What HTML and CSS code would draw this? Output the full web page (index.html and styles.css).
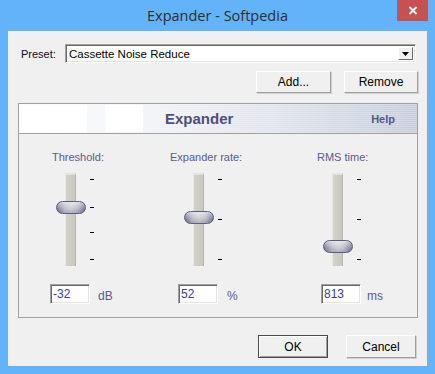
FILE: index.html
```html
<!DOCTYPE html>
<html>
<head>
  <title>Expander - Softpedia</title>
  <link rel="stylesheet" href="styles.css">
</head>
<body>

  <div class="window">
    <div class="titlebar">
      <span class="title">Expander - Softpedia</span>
      <span class="close">
        <svg width="10" height="9" viewBox="0 0 10 9"><path d="M1.5 1 L8.5 8 M8.5 1 L1.5 8" stroke="#fff" stroke-width="2"/></svg>
      </span>
    </div>

    <div class="client">
      <div class="preset-row">
        <label class="preset-label">Preset:</label>
        <div class="combo">
          <span class="combo-text">Cassette Noise Reduce</span>
          <span class="combo-btn">
            <svg width="7" height="4" viewBox="0 0 7 4"><path d="M0 0 H7 L3.5 4 Z" fill="#000"/></svg>
          </span>
        </div>
      </div>

      <div class="preset-actions">
        <button class="btn btn-add">Add...</button>
        <button class="btn btn-remove">Remove</button>
      </div>

      <div class="panel">
        <div class="panel-head">
          <span class="blank blank-a"></span>
          <span class="blank blank-b"></span>
          <span class="panel-title">Expander</span>
          <span class="panel-help">Help</span>
        </div>

        <div class="panel-body">
          <div class="ctrl ctrl-threshold">
            <div class="ctrl-label">Threshold:</div>
            <div class="slider">
              <div class="track"></div>
              <div class="tick" style="top: 6px"></div>
              <div class="tick" style="top: 34px"></div>
              <div class="tick" style="top: 59px"></div>
              <div class="tick" style="top: 86px"></div>
              <div class="thumb" style="top: 28px"></div>
            </div>
            <div class="value-row">
              <div class="value-box">-32</div>
              <span class="unit">dB</span>
            </div>
          </div>

          <div class="ctrl ctrl-rate">
            <div class="ctrl-label">Expander rate:</div>
            <div class="slider">
              <div class="track"></div>
              <div class="tick" style="top: 6px"></div>
              <div class="tick" style="top: 46px"></div>
              <div class="tick" style="top: 86px"></div>
              <div class="thumb" style="top: 38px"></div>
            </div>
            <div class="value-row">
              <div class="value-box">52</div>
              <span class="unit">%</span>
            </div>
          </div>

          <div class="ctrl ctrl-rms">
            <div class="ctrl-label">RMS time:</div>
            <div class="slider">
              <div class="track"></div>
              <div class="tick" style="top: 6px"></div>
              <div class="tick" style="top: 46px"></div>
              <div class="tick" style="top: 86px"></div>
              <div class="thumb" style="top: 67px"></div>
            </div>
            <div class="value-row">
              <div class="value-box">813</div>
              <span class="unit">ms</span>
            </div>
          </div>
        </div>
      </div>

      <div class="dialog-actions">
        <button class="btn btn-default">OK</button>
        <button class="btn">Cancel</button>
      </div>
    </div>
  </div>

</body>
</html>
```

FILE: styles.css
```css
body {
  margin: 0;
  font-family: "Liberation Sans", Arial, sans-serif;
}
.window {
  width: 435px;
  height: 374px;
  box-sizing: border-box;
  padding: 0 8px 8px 8px;
  background-color: #63b3fa;
  display: flex;
  flex-direction: column;
}
.titlebar {
  position: relative;
  height: 31px;
  display: flex;
  justify-content: center;
  align-items: center;
}
.title {
  font-family: "Open Sans", "Noto Sans", sans-serif;
  font-size: 14.5px;
  color: #2e2e2e;
  margin-top: -1px;
}
.close {
  position: absolute;
  top: 0;
  right: -1px;
  width: 31px;
  height: 21px;
  background-color: #c75050;
  display: flex;
  justify-content: center;
  align-items: center;
}
.client {
  flex: 1;
  background-color: #f0f0f0;
  padding: 13px 8px 0 10px;
  display: flex;
  flex-direction: column;
}

/* preset */
.preset-row {
  display: flex;
  align-items: center;
  height: 19px;
}
.preset-label {
  width: 47px;
  padding-left: 3px;
  box-sizing: border-box;
  font-size: 11px;
  color: #0a0a30;
}
.combo {
  width: 351px;
  height: 19px;
  box-sizing: border-box;
  background: #fff;
  border: 1px solid;
  border-color: #a0a0a0 #fff #fff #a0a0a0;
  box-shadow: inset 1px 1px 0 #696969, inset -1px -1px 0 #e3e3e3;
  display: flex;
  align-items: center;
  padding: 0 2px 0 3px;
}
.combo-text {
  flex: 1;
  font-size: 11.5px;
  color: #000;
}
.combo-btn {
  width: 15px;
  height: 13px;
  box-sizing: border-box;
  background: #f0f0f0;
  border: 1px solid;
  border-color: #fff #696969 #696969 #fff;
  display: flex;
  justify-content: center;
  align-items: center;
}
.preset-actions {
  display: flex;
  justify-content: flex-end;
  gap: 13px;
  margin-top: 8px;
  padding-right: 1px;
}

/* buttons */
.btn {
  height: 22px;
  width: 74px;
  box-sizing: border-box;
  background-color: #f0f0f0;
  border: 1px solid;
  border-color: #fff #a0a0a0 #a0a0a0 #fff;
  box-shadow: 1px 1px 0 #d0d0d0;
  font-family: "Liberation Sans", Arial, sans-serif;
  font-size: 12px;
  color: #000;
  padding: 0;
}
.btn-add {
  width: 75px;
}
.dialog-actions {
  display: flex;
  justify-content: flex-end;
  gap: 18px;
  margin-top: 17px;
  padding-right: 3px;
}
.dialog-actions .btn {
  width: 70px;
  height: 23px;
}
.btn-default {
  border: 1px solid #4a4a4a;
  box-shadow: inset 1px 1px 0 #fff, inset -1px -1px 0 #a0a0a0;
}

/* panel */
.panel {
  margin-top: 10px;
  width: 400px;
  box-sizing: border-box;
  border: 1px solid #a0a0a0;
}
.panel-head {
  height: 29px;
  border-bottom: 1px solid #a0a0a0;
  background:
    repeating-linear-gradient(to bottom, rgba(255,255,255,0.25) 0, rgba(255,255,255,0.25) 1px, rgba(0,0,0,0) 1px, rgba(0,0,0,0) 2px),
    linear-gradient(to right, #fdfdfe 0%, #f1f2f6 35%, #dfe3ec 65%, #c6ccdc 100%);
  display: flex;
  align-items: center;
}
.blank {
  height: 27px;
  background: #fff;
}
.blank-a {
  margin-left: 3px;
  width: 65px;
}
.blank-b {
  margin-left: 18px;
  width: 38px;
}
.panel-title {
  margin-left: 22px;
  font-family: "Liberation Sans", Arial, sans-serif;
  font-weight: bold;
  font-size: 15px;
  color: #4f4f7f;
}
.panel-help {
  margin-left: auto;
  margin-right: 22px;
  font-family: "Liberation Sans", Arial, sans-serif;
  font-weight: bold;
  font-size: 11px;
  color: #55558a;
}
.panel-body {
  display: grid;
  grid-template-columns: 120px 147px 1fr;
  padding: 16px 0 13px 31px;
}
.ctrl {
  display: flex;
  flex-direction: column;
  align-items: flex-start;
}
.ctrl-label {
  font-size: 11px;
  line-height: 14px;
  color: #5a5a94;
}
.slider {
  position: relative;
  width: 37px;
  height: 93px;
  margin-top: 9px;
}
.track {
  position: absolute;
  left: 9px;
  top: 0;
  width: 11px;
  height: 93px;
  box-sizing: border-box;
  border-top: 2px solid #e4e4dc;
  border-left: 1px solid #e8e8e2;
  border-right: 1px solid #b8b8b0;
  background: linear-gradient(to right, #d2d2ca, #c8c8c0);
}
.tick {
  position: absolute;
  left: 34px;
  width: 4px;
  height: 1px;
  background: #000;
}
.thumb {
  position: absolute;
  left: 0;
  width: 30px;
  height: 13px;
  box-sizing: border-box;
  border: 1px solid #5e5e7c;
  border-radius: 7px;
  background:
    linear-gradient(to bottom, rgba(255,255,255,0.55), rgba(255,255,255,0.1) 55%, rgba(0,0,0,0.12)),
    linear-gradient(to right, #767696, #bcbccc 28%, #cdcdd9 50%, #bcbccc 72%, #767696);
}
.value-row {
  display: flex;
  align-items: center;
  margin-top: 18px;
}
.value-box {
  width: 40px;
  height: 20px;
  box-sizing: border-box;
  background: #fff;
  border: 1px solid;
  border-color: #a0a0a0 #fff #fff #a0a0a0;
  box-shadow: inset 1px 1px 0 #696969, inset -1px -1px 0 #e3e3e3;
  padding: 2px 0 0 2px;
  font-size: 12px;
  color: #3c3c8a;
}
.unit {
  margin-top: 3px;
  font-size: 12px;
  color: #5a5a94;
}
.ctrl-threshold .ctrl-label { margin-left: 2px; }
.ctrl-threshold .slider { margin-left: 6px; }
.ctrl-threshold .unit { margin-left: 8px; }
.ctrl-rate .slider { margin-left: 14px; }
.ctrl-rate .value-row { margin-left: 8px; }
.ctrl-rate .unit { margin-left: 9px; }
.ctrl-rms .slider { margin-left: 6px; }
.ctrl-rms .value-row { margin-left: 4px; }
.ctrl-rms .unit { margin-left: 6px; }
```
